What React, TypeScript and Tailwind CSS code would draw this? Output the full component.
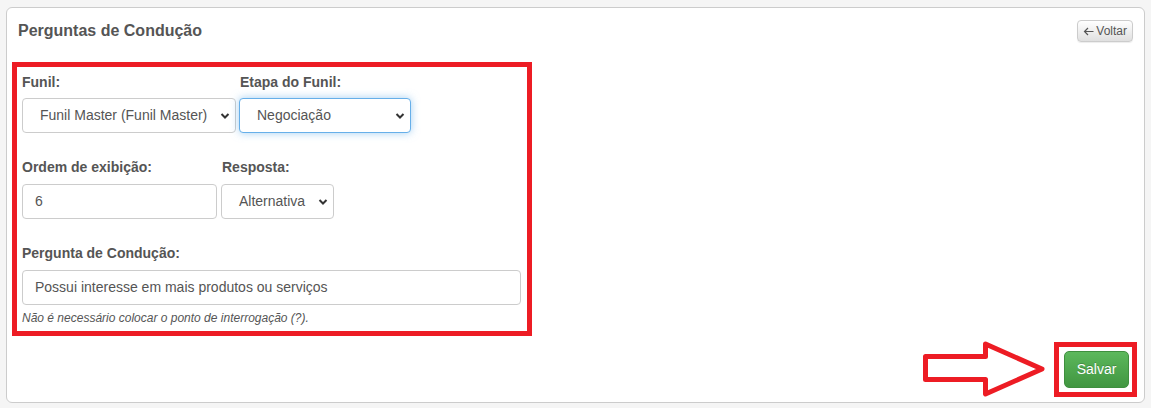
import { ReactNode } from 'react';

const Chevron = () => (
  <svg width="10" height="7" viewBox="0 0 10 7" className="absolute right-[5px] top-1/2 -translate-y-1/2 pointer-events-none">
    <path d="M1.5 1.5L5 5L8.5 1.5" fill="none" stroke="#333" strokeWidth="2" />
  </svg>
);

function Select({ value, width, focused }: { value: string; width: string; focused?: boolean }) {
  return (
    <div
      className={`relative h-[35px] ${width} rounded-[4px] border bg-white flex items-center pl-[17px] text-[14px] text-[#555] ${
        focused ? 'border-[#66afe9] shadow-[0_0_8px_rgba(102,175,233,0.6)]' : 'border-[#ccc]'
      }`}
    >
      {value}
      <Chevron />
    </div>
  );
}

function Field({ label, children, className = '' }: { label: string; children: ReactNode; className?: string }) {
  return (
    <div className={`flex flex-col ${className}`}>
      <label className="text-[14px] font-bold leading-[20px] text-[#555] mb-[6px]">{label}</label>
      {children}
    </div>
  );
}

const TextInput = ({ value, width }: { value: string; width: string }) => (
  <div className={`h-[35px] ${width} rounded-[4px] border border-[#ccc] bg-white flex items-center pl-[12px] text-[14px] text-[#555]`}>
    {value}
  </div>
);

export default function App() {
  return (
    <div className="min-h-[408px] bg-[#f5f5f5] pt-[7px] pl-[6px] font-['Liberation_Sans',Arial,sans-serif]">
      <div className="w-[1139px] bg-white border border-[#ccc] rounded-[6px]">
        <div className="flex items-center justify-between h-[22px] mt-[12px] px-[11px]">
          <h1 className="text-[16px] font-bold text-[#555]">Perguntas de Condução</h1>
          <button className="h-[22px] px-[5px] rounded-[4px] border border-[#ccc] bg-gradient-to-b from-white to-[#e0e0e0] text-[12px] text-[#555] flex items-center gap-[2px] shadow-[0_1px_1px_rgba(0,0,0,0.075)]">
            <svg width="11" height="9" viewBox="0 0 11 9">
              <path d="M10.5 4.5H1.5M5 1L1.5 4.5L5 8" fill="none" stroke="#555" strokeWidth="1.2" />
            </svg>
            <span>Voltar</span>
          </button>
        </div>

        <div className="mt-[20px] ml-[5px] w-[520px] border-[5px] border-[#ed1c24] px-[5px] pt-[5px] pb-[5px]">
          <div className="flex gap-[3px]">
            <Field label="Funil:">
              <Select value="Funil Master (Funil Master)" width="w-[214px]" />
            </Field>
            <Field label="Etapa do Funil:" className="[&>label]:pl-[1px]">
              <Select value="Negociação" width="w-[172px]" focused />
            </Field>
          </div>

          <div className="flex gap-[4px] mt-[24px] [&_label]:mb-[7px]">
            <Field label="Ordem de exibição:">
              <TextInput value="6" width="w-[195px]" />
            </Field>
            <Field label="Resposta:" className="[&>label]:pl-[1px]">
              <Select value="Alternativa" width="w-[113px]" />
            </Field>
          </div>

          <div className="mt-[24px] [&_label]:mb-[7px]">
            <Field label="Pergunta de Condução:">
              <TextInput value="Possui interesse em mais produtos ou serviços" width="w-[499px]" />
            </Field>
            <p className="mt-[5px] text-[12px] leading-[16px] italic text-[#555]">
              Não é necessário colocar o ponto de interrogação (?).
            </p>
          </div>
        </div>

        <div className="flex items-center justify-end mt-[5px] mb-[5px] pr-[7px]">
          <svg width="124" height="56" viewBox="0 0 124 56" className="mr-[7px]">
            <polygon
              points="2.5,15.5 62.5,15.5 62.5,3 119,28 62.5,53 62.5,38.5 2.5,38.5"
              fill="white"
              stroke="#ed1c24"
              strokeWidth="5"
              strokeLinejoin="round"
            />
          </svg>
          <div className="w-[83px] h-[55px] border-[5px] border-[#ed1c24] flex items-center pl-[5px]">
            <button className="w-[65px] h-[37px] rounded-[5px] border border-[#3e8f3e] bg-gradient-to-b from-[#5cb85c] to-[#419641] text-white text-[14px] [text-shadow:0_-1px_0_rgba(0,0,0,0.2)]">
              Salvar
            </button>
          </div>
        </div>
      </div>
    </div>
  );
}
